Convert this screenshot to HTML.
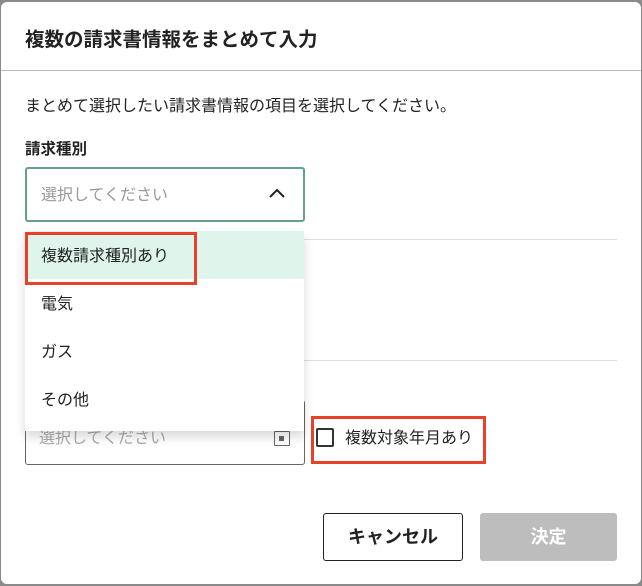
<!DOCTYPE html>
<html><head><meta charset="utf-8"><style>
*{box-sizing:border-box;margin:0;padding:0}
body{width:642px;height:586px;background:#8a8a8a;font-family:"Liberation Sans","Noto Sans CJK JP",sans-serif;color:#222;position:relative;overflow:hidden}
.modal{position:absolute;left:1px;top:2px;width:640px;height:582px;background:#fff;border-radius:6px}
.abs{position:absolute;white-space:nowrap}
</style></head><body>
<div class="modal"></div>
<div class="abs" style="left:25px;top:26px;font-size:19.5px;font-weight:bold;line-height:28px">複数の請求書情報をまとめて入力</div>
<div class="abs" style="left:1px;top:70px;width:640px;height:1px;background:#bbb"></div>
<div class="abs" style="left:25px;top:96px;font-size:16px;line-height:22px">まとめて選択したい請求書情報の項目を選択してください。</div>
<div class="abs" style="left:25px;top:139px;font-size:15.5px;font-weight:bold;line-height:22px">請求種別</div>
<div class="abs" style="left:25px;top:167px;width:280px;height:55px;border:2px solid #64a08c;border-radius:3px"></div>
<div class="abs" style="left:41px;top:185px;font-size:16px;color:#999;line-height:22px">選択してください</div>
<svg class="abs" style="left:268px;top:187px" width="18" height="12"><path d="M2 10 L9 3 L16 10" stroke="#222" stroke-width="2" fill="none"/></svg>
<div class="abs" style="left:304px;top:239px;width:313px;height:1px;background:#ddd"></div>
<div class="abs" style="left:304px;top:360px;width:313px;height:1px;background:#ddd"></div>
<div class="abs" style="left:25px;top:400px;width:280px;height:65px;border:1px solid #666;border-radius:3px"></div>
<div class="abs" style="left:39px;top:428px;font-size:16px;color:#aaa;line-height:22px">選択してください</div>
<div class="abs" style="left:274px;top:431px;width:16px;height:15px;border:1.5px solid #666;border-radius:1px"><div style="position:absolute;left:4px;top:4px;width:5px;height:5px;background:#666"></div></div>
<div class="abs" style="left:25px;top:231px;width:279px;height:200px;background:#fff;box-shadow:0 6px 10px rgba(0,0,0,.15)">
<div style="height:48px;background:#dff5ec"></div>
</div>
<div class="abs" style="left:41px;top:246px;font-size:16px;line-height:22px">複数請求種別あり</div>
<div class="abs" style="left:41px;top:294px;font-size:16px;line-height:22px">電気</div>
<div class="abs" style="left:41px;top:342px;font-size:16px;line-height:22px">ガス</div>
<div class="abs" style="left:41px;top:390px;font-size:16px;line-height:22px">その他</div>
<div class="abs" style="left:25px;top:232px;width:172px;height:53px;border:3.5px solid #e8412a"></div>
<div class="abs" style="left:316px;top:428px;width:18px;height:19px;border:2px solid #333;border-radius:2px"></div>
<div class="abs" style="left:345px;top:428px;font-size:16px;line-height:22px">複数対象年月あり</div>
<div class="abs" style="left:311px;top:416px;width:175px;height:48px;border:3.5px solid #e8412a"></div>
<div class="abs" style="left:323px;top:513px;width:140px;height:48px;border:1px solid #222;border-radius:3px;font-size:18px;font-weight:bold;text-align:center;line-height:46px">キャンセル</div>
<div class="abs" style="left:480px;top:513px;width:137px;height:48px;background:#bdbdbd;border-radius:3px;font-size:18px;font-weight:bold;color:#fff;text-align:center;line-height:48px">決定</div>
</body></html>
